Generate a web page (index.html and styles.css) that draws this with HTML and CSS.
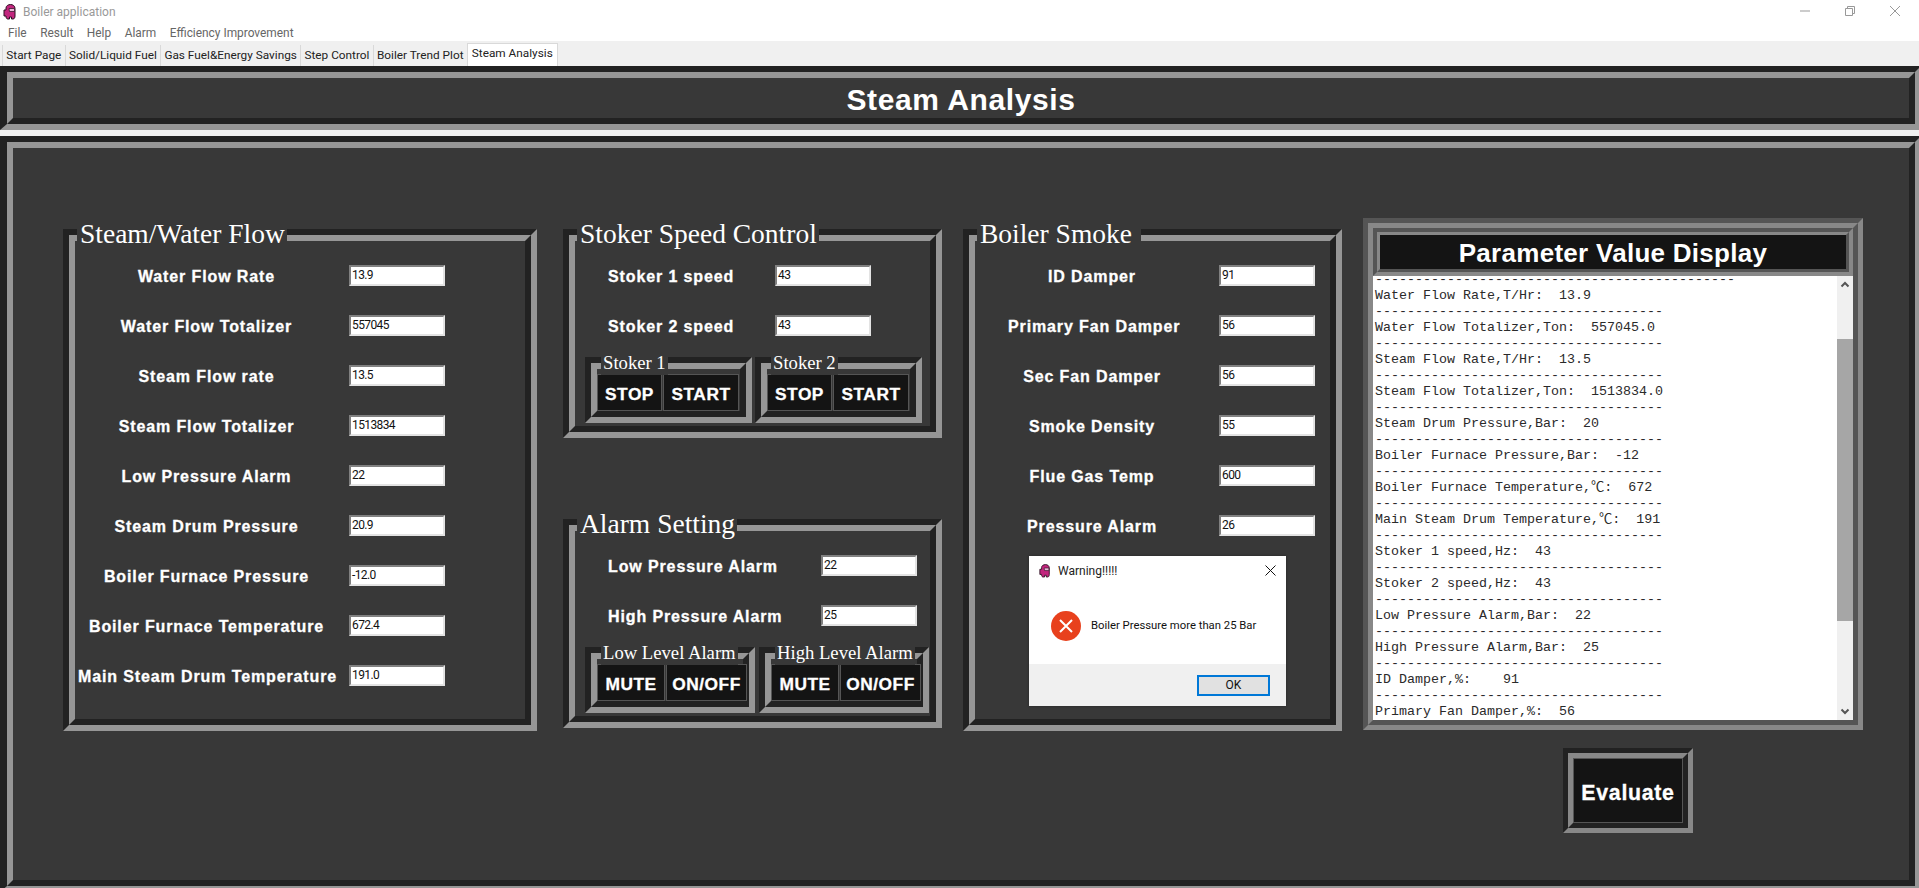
FILE: index.html
```html
<!DOCTYPE html>
<html lang="en">
<head>
  <meta charset="UTF-8" />
  <title>Boiler application</title>
  <link rel="stylesheet" href="styles.css">
</head>
<body>
  <div class="titlebar">
    <svg class="app-icon" viewBox="0 0 14 16">
      <path d="M1 6h2V4c0-2 2-3.500 4.500-3.500S12 2 12 4.500V12c0 1.500-.5 3-2 3H8.500v-2h-2v2H5c-1.500 0-2-1-2-3H1z" fill="#c2267e" stroke="#2a1020"/>
      <path d="M6 4.500h5.500v3H6.500z" fill="#e9b8d8" stroke="#2a1020" stroke-width=".7"/>
    </svg>
    <span class="app-name">Boiler application</span>
    <div class="win-buttons">
      <svg width="12" height="12" viewBox="0 0 12 12"><path d="M1 6h10" stroke="#999" fill="none"/></svg>
      <svg width="12" height="12" viewBox="0 0 12 12"><path d="M1.500 3.500h7v7h-7zM3.500 3.500v-2h7v7h-2" stroke="#999" fill="none"/></svg>
      <svg width="12" height="12" viewBox="0 0 12 12"><path d="M1 1l10 10M11 1L1 11" stroke="#999" fill="none"/></svg>
    </div>
  </div>
  <div class="menubar">
    <span>File</span>
    <span>Result</span>
    <span>Help</span>
    <span>Alarm</span>
    <span>Efficiency Improvement</span>
  </div>
  <div class="tabs">
    <div class="tab">Start Page</div>
    <div class="tab">Solid/Liquid Fuel</div>
    <div class="tab">Gas Fuel&amp;Energy Savings</div>
    <div class="tab">Step Control</div>
    <div class="tab">Boiler Trend Plot</div>
    <div class="tab active">Steam Analysis</div>
  </div>

  <div class="frame page-frame">
    <div class="frame-in page-title">Steam Analysis</div>
  </div>

  <div class="frame page-frame main-frame">
    <div class="frame-in main-area">

      <div class="frame panel flow-panel">
        <div class="legend">Steam/Water Flow</div>
        <div class="frame-in panel-in">
          <div class="rows flow-rows">
            <div class="row-label">Water Flow Rate</div><div class="entry">13.9</div>
            <div class="row-label">Water Flow Totalizer</div><div class="entry">557045</div>
            <div class="row-label">Steam Flow rate</div><div class="entry">13.5</div>
            <div class="row-label">Steam Flow Totalizer</div><div class="entry">1513834</div>
            <div class="row-label">Low Pressure Alarm</div><div class="entry">22</div>
            <div class="row-label">Steam Drum Pressure</div><div class="entry">20.9</div>
            <div class="row-label">Boiler Furnace Pressure</div><div class="entry">-12.0</div>
            <div class="row-label">Boiler Furnace Temperature</div><div class="entry">672.4</div>
            <div class="row-label">Main Steam Drum Temperature</div><div class="entry">191.0</div>
          </div>
        </div>
      </div>

      <div class="middle-col">
        <div class="frame panel small-panel">
          <div class="legend">Stoker Speed Control</div>
          <div class="frame-in panel-in">
            <div class="rows stoker-rows">
              <div class="row-label">Stoker 1 speed</div><div class="entry">43</div>
              <div class="row-label">Stoker 2 speed</div><div class="entry">43</div>
            </div>
            <div class="sub-row">
              <div class="frame sub-panel">
                <div class="legend sub-legend">Stoker 1</div>
                <div class="frame-in sub-in">
                  <button class="btn stop">STOP</button>
                  <button class="btn start">START</button>
                </div>
              </div>
              <div class="frame sub-panel">
                <div class="legend sub-legend">Stoker 2</div>
                <div class="frame-in sub-in">
                  <button class="btn stop">STOP</button>
                  <button class="btn start">START</button>
                </div>
              </div>
            </div>
          </div>
        </div>

        <div class="frame panel small-panel">
          <div class="legend">Alarm Setting</div>
          <div class="frame-in panel-in">
            <div class="rows alarm-rows">
              <div class="row-label">Low Pressure Alarm</div><div class="entry">22</div>
              <div class="row-label">High Pressure Alarm</div><div class="entry">25</div>
            </div>
            <div class="sub-row alarm-subs">
              <div class="frame sub-panel wide">
                <div class="legend sub-legend">Low Level Alarm</div>
                <div class="frame-in sub-in">
                  <button class="btn mute">MUTE</button>
                  <button class="btn onoff">ON/OFF</button>
                </div>
              </div>
              <div class="frame sub-panel wide">
                <div class="legend sub-legend">High Level Alarm</div>
                <div class="frame-in sub-in">
                  <button class="btn mute">MUTE</button>
                  <button class="btn onoff">ON/OFF</button>
                </div>
              </div>
            </div>
          </div>
        </div>
      </div>

      <div class="frame panel smoke-panel">
        <div class="legend">Boiler Smoke&nbsp;</div>
        <div class="frame-in panel-in">
          <div class="rows smoke-rows">
            <div class="row-label">ID Damper</div><div class="entry">91</div>
            <div class="row-label">Primary Fan Damper</div><div class="entry">56</div>
            <div class="row-label">Sec Fan Damper</div><div class="entry">56</div>
            <div class="row-label">Smoke Density</div><div class="entry">55</div>
            <div class="row-label">Flue Gas Temp</div><div class="entry">600</div>
            <div class="row-label">Pressure Alarm</div><div class="entry">26</div>
          </div>
        </div>
      </div>

      <div class="param-col">
        <div class="frame param-frame">
          <div class="frame-in param-in">
            <div class="frame param-head">
              <div class="frame-in param-title">Parameter Value Display</div>
            </div>
            <div class="textbox">
              <pre class="log">---------------------------------------------
Water Flow Rate,T/Hr:  13.9
------------------------------------
Water Flow Totalizer,Ton:  557045.0
------------------------------------
Steam Flow Rate,T/Hr:  13.5
------------------------------------
Steam Flow Totalizer,Ton:  1513834.0
------------------------------------
Steam Drum Pressure,Bar:  20
------------------------------------
Boiler Furnace Pressure,Bar:  -12
------------------------------------
Boiler Furnace Temperature,℃:  672
------------------------------------
Main Steam Drum Temperature,℃:  191
------------------------------------
Stoker 1 speed,Hz:  43
------------------------------------
Stoker 2 speed,Hz:  43
------------------------------------
Low Pressure Alarm,Bar:  22
------------------------------------
High Pressure Alarm,Bar:  25
------------------------------------
ID Damper,%:    91
------------------------------------
Primary Fan Damper,%:  56</pre>
              <div class="scrollbar">
                <svg class="arrow" width="16" height="17" viewBox="0 0 16 17"><path d="M4.500 10.500L8 7l3.500 3.500" stroke="#555" stroke-width="2" fill="none"/></svg>
                <div class="thumb"></div>
                <svg class="arrow arrow-down" width="16" height="17" viewBox="0 0 16 17"><path d="M4.500 6.500L8 10l3.500-3.500" stroke="#555" stroke-width="2" fill="none"/></svg>
              </div>
            </div>
          </div>
        </div>
        <div class="frame eval-frame">
          <div class="frame-in eval-in">
            <button class="btn eval-btn">Evaluate</button>
          </div>
        </div>
      </div>

    </div>
  </div>

  <div class="dialog">
    <div class="dialog-top">
      <svg class="app-icon" viewBox="0 0 14 16">
        <path d="M1 6h2V4c0-2 2-3.500 4.500-3.500S12 2 12 4.500V12c0 1.500-.5 3-2 3H8.500v-2h-2v2H5c-1.500 0-2-1-2-3H1z" fill="#c2267e" stroke="#2a1020"/>
        <path d="M6 4.500h5.500v3H6.500z" fill="#e9b8d8" stroke="#2a1020" stroke-width=".7"/>
      </svg>
      <span class="dialog-title">Warning!!!!!</span>
      <svg class="dialog-close" width="11" height="11" viewBox="0 0 11 11"><path d="M.5.500l10 10M10.500.500l-10 10" stroke="#111" fill="none"/></svg>
    </div>
    <div class="dialog-body">
      <svg width="30" height="30" viewBox="0 0 30 30">
        <circle cx="15" cy="15" r="15" fill="#e8411d"/>
        <path d="M9 9l12 12M21 9L9 21" stroke="#fff" stroke-width="2" fill="none"/>
      </svg>
      <span class="dialog-msg">Boiler Pressure more than 25 Bar</span>
    </div>
    <div class="dialog-foot">
      <button class="ok-btn">OK</button>
    </div>
  </div>
</body>
</html>
```

FILE: styles.css
```css
* {
  margin: 0; padding: 0;
  box-sizing: border-box;
}
body {
  width: 1919px;
  height: 888px;
  overflow: hidden;
  position: relative;
  background-color: #f0f0f0;
  font-family: Roboto, 'Liberation Sans', sans-serif;
  font-size: 12px;
}

/* window chrome */
.titlebar {
  height: 22px;
  background-color: white;
  display: flex;
  align-items: center;
  padding: 2px 0 0 3px;
}
.app-icon {
  width: 14px;
  height: 16px;
}
.app-name {
  margin-left: 6px;
  color: #999;
}
.win-buttons {
  margin-left: auto;
  display: flex;
  gap: 33px;
  padding-right: 18px;
  margin-top: -2px;
}
.menubar {
  height: 19px;
  background-color: white;
  display: flex;
  align-items: center;
  gap: 13.5px;
  padding: 2px 0 0 8px;
  color: #666;
  font-size: 11.9px;
}
.tabs {
  height: 25px;
  display: flex;
  align-items: flex-end;
  padding-left: 2px;
  font-size: 11.8px;
}
.tab {
  height: 21px;
  padding: 0 3.3px;
  line-height: 20px;
  color: #222;
  border-left: 1px solid #d9d9d9;
  white-space: nowrap;
}
.tab.active {
  height: 23px;
  padding: 0 4px;
  line-height: 18px;
  background-color: white;
  border: 1px solid #d9d9d9;
  border-bottom: none;
}

/* the ridge look: two nested borders */
.frame {
  border: 6px solid;
  border-color: #222 #969696 #969696 #222;
}
.frame-in {
  border: 6px solid;
  border-color: #969696 #222 #222 #969696;
  background-color: #383838;
}
.page-frame {
  margin-right: -2px;
  border-left-width: 7px;
  height: 64px;
}
.page-title {
  height: 52px;
  display: flex;
  align-items: center;
  justify-content: center;
  padding-top: 3px;
  color: white;
  font: bold 30px 'Liberation Sans', sans-serif;
  letter-spacing: 0.6px;
}
.main-frame {
  margin-top: 6px;
  height: 756px;
}
.main-area {
  height: 744px;
  display: flex;
  align-items: flex-start;
  gap: 21px;
  padding: 70px 0 0 50px;
}

/* panels */
.panel {
  position: relative;
  margin-top: 11px;
}
.flow-panel {
  width: 474px;
  height: 502px;
  margin-right: 5px;
}
.smoke-panel {
  width: 379px;
  height: 502px;
}
.middle-col {
  display: flex;
  flex-direction: column;
  gap: 70px;
}
.small-panel {
  width: 379px;
  height: 209px;
}
.panel-in {
  height: 100%;
  padding-top: 24px;
}
.legend {
  position: absolute;
  left: 8px;
  top: -16px;
  padding: 0 2px 0 3px;
  background-color: #383838;
  color: white;
  font: 27.5px/30px 'Liberation Serif', serif;
  white-space: nowrap;
}
.rows {
  display: grid;
  row-gap: 29px;
  align-items: center;
}
.flow-rows {
  grid-template-columns: 257px 96px;
  column-gap: 14px;
  padding-left: 3px;
}
.stoker-rows {
  grid-template-columns: 124px 96px;
  column-gap: 43px;
  padding-left: 33px;
}
.alarm-rows {
  grid-template-columns: 170px 96px;
  column-gap: 43px;
  padding-left: 33px;
}
.smoke-rows {
  grid-template-columns: 168px 96px;
  column-gap: 43px;
  padding-left: 33px;
}
.row-label {
  padding-top: 3px;
  text-align: center;
  color: white;
  font: bold 16px/18px 'Liberation Sans', sans-serif;
  letter-spacing: 0.88px;
  -webkit-text-stroke: 0.3px white;
  white-space: nowrap;
}
.entry {
  height: 21px;
  padding-left: 1px;
  background-color: white;
  border: 2px solid;
  border-color: #808080 #e3e3e3 #e3e3e3 #808080;
  color: #111;
  font-size: 12px;
  line-height: 16px;
  letter-spacing: -0.6px;
}

/* small frames holding the buttons */
.sub-row {
  display: flex;
  gap: 3px;
  margin-top: 21px;
  padding-left: 10px;
}
.alarm-subs {
  gap: 4px;
}
.sub-panel {
  position: relative;
  width: 167px;
  height: 66px;
}
.sub-panel.wide {
  width: 170px;
}
.sub-legend {
  left: 10px;
  top: -12px;
  padding: 0 2px;
  font-size: 18.67px;
  line-height: 24px;
}
.sub-in {
  height: 54px;
  padding-top: 5px;
  display: flex;
  gap: 1px;
}
.btn {
  height: 37px;
  flex: none;
  padding-top: 3px;
  background-color: #141414;
  border: 1px solid #555;
  color: white;
  font: bold 17.33px 'Liberation Sans', sans-serif;
  letter-spacing: 0.5px;
  -webkit-text-stroke: 0.3px white;
}
.stop { width: 65px; }
.start { width: 76px; }
.mute { width: 68px; }
.onoff { width: 81px; }

/* right column */
.param-frame {
  width: 500px;
  height: 512px;
  border-width: 5px;
  border-color: #555 #888 #888 #555;
}
.param-in {
  height: 502px;
  border-width: 5px;
  border-color: #888 #555 #555 #888;
  background-color: #555;
}
.param-head {
  height: 48px;
  border-width: 4px;
  border-color: #555 #888 #888 #555;
}
.param-title {
  height: 40px;
  padding-top: 2px;
  border-width: 3px;
  border-color: #888 #555 #555 #888;
  background-color: #141414;
  display: flex;
  align-items: center;
  justify-content: center;
  color: white;
  font: bold 26px 'Liberation Sans', sans-serif;
  letter-spacing: 0.28px;
}
.textbox {
  height: 444px;
  display: flex;
  background-color: white;
  overflow: hidden;
}
.log {
  flex: 1;
  margin-top: -4px;
  padding-left: 2px;
  font: 13.33px/16px 'Liberation Mono', 'Noto Sans CJK SC', monospace;
  color: #2a2a2a;
}
.scrollbar {
  width: 16px;
  background-color: #f0f0f0;
  display: flex;
  flex-direction: column;
}
.arrow {
  flex: none;
}
.arrow-down {
  margin-top: auto;
}
.thumb {
  height: 282px;
  margin-top: 46px;
  background-color: #a6a6a6;
}
.eval-frame {
  width: 130px;
  height: 85px;
  margin: 18px 0 0 200px;
  border-width: 5px;
  border-color: #222 #888 #888 #222;
}
.eval-in {
  height: 75px;
  border-width: 5px;
  border-color: #888 #222 #222 #888;
}
.eval-btn {
  width: 100%;
  height: 100%;
  padding-top: 5px;
  font-size: 21.33px;
  letter-spacing: 0.7px;
}

/* message box on top of the page */
.dialog {
  position: absolute;
  left: 1029px;
  top: 556px;
  width: 257px;
  height: 150px;
  background-color: white;
  display: flex;
  flex-direction: column;
  box-shadow: 0 0 3px rgba(0,0,0,0.3);
}
.dialog-top {
  height: 29px;
  display: flex;
  align-items: center;
  padding: 0 10px;
}
.dialog-top .app-icon {
  width: 12px;
  height: 14px;
}
.dialog-title {
  margin-left: 7px;
  color: #222;
}
.dialog-close {
  margin-left: auto;
}
.dialog-body {
  flex: 1;
  display: flex;
  align-items: center;
  gap: 10px;
  padding: 2px 0 0 22px;
}
.dialog-msg {
  color: #111;
  font-size: 11.3px;
}
.dialog-foot {
  height: 42px;
  background-color: #f0f0f0;
  display: flex;
  justify-content: flex-end;
  align-items: center;
  padding-right: 16px;
}
.ok-btn {
  width: 73px;
  height: 21px;
  background-color: #e1e1e1;
  border: 2px solid #0078d7;
  font: 12px Roboto, sans-serif;
  color: #111;
}
```
